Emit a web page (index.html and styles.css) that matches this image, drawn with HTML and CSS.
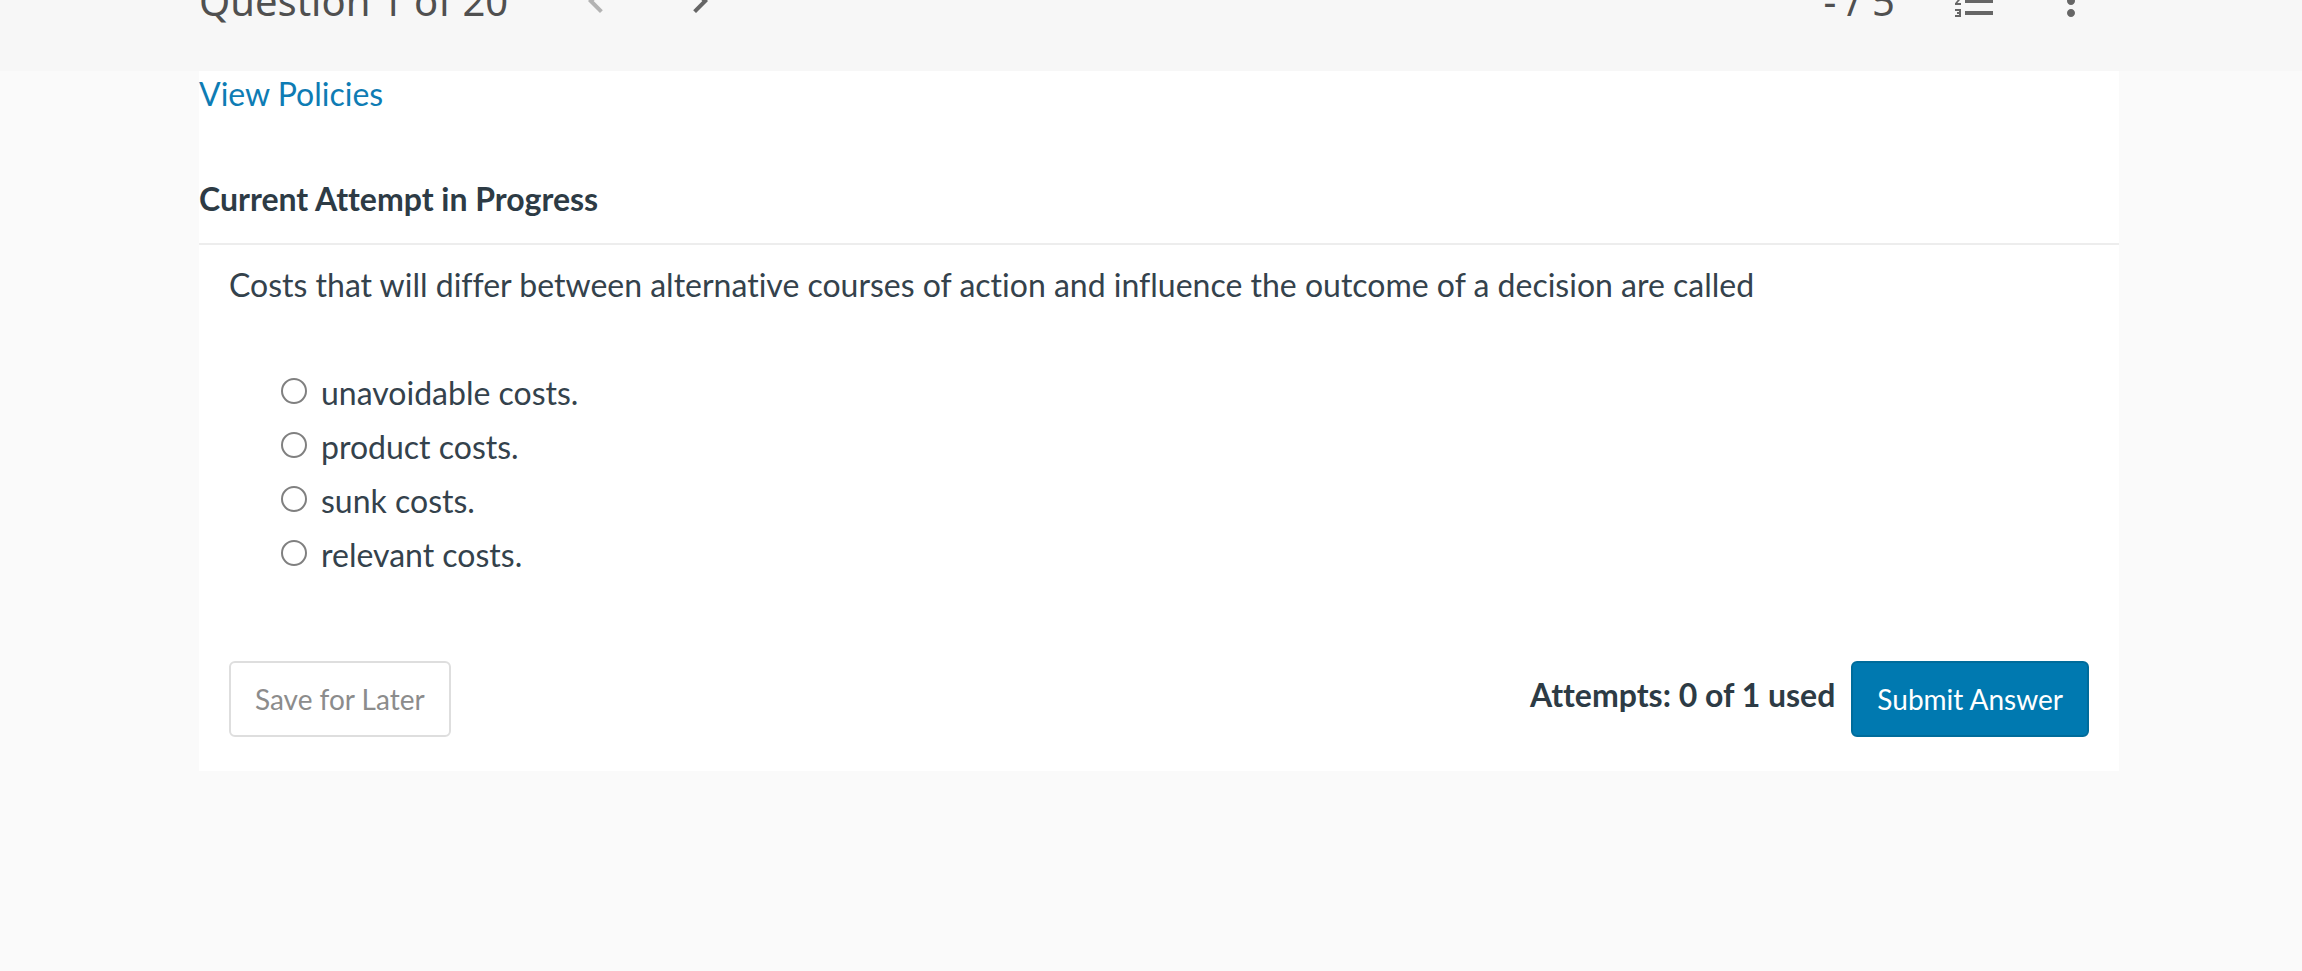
FILE: index.html
```html
<!DOCTYPE html>
<html lang="en">
<head>
  <meta charset="UTF-8">
  <meta name="viewport" content="width=device-width, initial-scale=1.0">
  <title>Question 1 of 20</title>
  <link rel="stylesheet" href="styles.css">
</head>
<body>
  <!-- Toolbar -->
  <header class="toolbar">
    <h1 class="title">Question 1 of 20</h1>
    <nav class="pager">
      <button class="icon-btn" type="button" aria-label="Previous question" disabled>
        <svg viewBox="0 0 24 24"><path d="M15.41 7.41L14 6l-6 6 6 6 1.41-1.41L10.83 12z"/></svg>
      </button>
      <button class="icon-btn" type="button" aria-label="Next question">
        <svg viewBox="0 0 24 24"><path d="M10 6L8.59 7.41 13.17 12l-4.58 4.59L10 18l6-6z"/></svg>
      </button>
    </nav>
    <div class="tools">
      <span class="score">- / 5</span>
      <button class="icon-btn" type="button" aria-label="Question list">
        <svg viewBox="0 0 24 24"><path d="M2 17h2v.5H3v1h1v.5H2v1h3v-4H2v1zm1-9h1V4H2v1h1v3zm-1 3h1.8L2 13.1v.9h3v-1H3.2L5 10.9V10H2v1zm5-6v2h14V5H7zm0 14h14v-2H7v2zm0-6h14v-2H7v2z"/></svg>
      </button>
      <button class="icon-btn" type="button" aria-label="More options">
        <svg viewBox="0 0 24 24"><path d="M12 8c1.1 0 2-.9 2-2s-.9-2-2-2-2 .9-2 2 .9 2 2 2zm0 2c-1.1 0-2 .9-2 2s.9 2 2 2 2-.9 2-2-.9-2-2-2zm0 6c-1.1 0-2 .9-2 2s.9 2 2 2 2-.9 2-2-.9-2-2-2z"/></svg>
      </button>
    </div>
  </header>

  <!-- Question -->
  <main class="card">
    <a class="policies" href="#">View Policies</a>
    <h2 class="status">Current Attempt in Progress</h2>

    <form class="question">
      <fieldset class="choices">
        <legend class="prompt">Costs that will differ between alternative courses of action and influence the outcome of a decision are called</legend>
        <label class="choice"><input type="radio" name="answer" value="a">unavoidable costs.</label>
        <label class="choice"><input type="radio" name="answer" value="b">product costs.</label>
        <label class="choice"><input type="radio" name="answer" value="c">sunk costs.</label>
        <label class="choice"><input type="radio" name="answer" value="d">relevant costs.</label>
      </fieldset>

      <div class="actions">
        <button class="btn" type="button">Save for Later</button>
        <span class="attempts">Attempts: 0 of 1 used</span>
        <button class="btn btn-primary" type="submit">Submit Answer</button>
      </div>
    </form>
  </main>
</body>
</html>
```
FILE: styles.css
```css
* {
  margin: 0;
  padding: 0;
  box-sizing: border-box;
}
body {
  font-family: Lato, sans-serif;
  font-size: 32px;
  line-height: 48px;
  font-variant-ligatures: none;
  background: #fafafa;
  color: #34424c;
}
/* the toolbar is scrolled half out of view */
.toolbar {
  display: flex;
  align-items: center;
  height: 140px;
  margin-top: -69px;
  padding: 0 207px 0 199px;
  background: #f7f7f7;
  color: #505050;
}
.title, .score {
  font-family: "Noto Sans", sans-serif;
  font-size: 40px;
  font-weight: 400;
}
.pager {
  display: flex;
  gap: 56px;
  margin-left: 64px;
}
.tools {
  display: flex;
  align-items: center;
  gap: 48px;
  margin-left: auto;
}
.score {
  margin-right: 8px;
}
.icon-btn {
  width: 48px;
  height: 48px;
  border: none;
  background: none;
  color: #666;
  cursor: pointer;
}
.icon-btn:disabled {
  color: #b3b3b3;
}
.icon-btn svg {
  display: block;
  fill: currentColor;
}
.card {
  margin: 0 183px 0 199px;
  background: #fff;
}
.policies {
  display: block;
  line-height: 46px;
  color: #0e7cb4;
  text-decoration: none;
}
.status {
  margin-top: 58px;
  padding-bottom: 20px;
  border-bottom: 2px solid #ededed;
  color: #2d3b45;
  font-size: 32px;
}
.question {
  padding: 16px 30px 34px;
}
.choices {
  border: none;
}
.prompt {
  margin-bottom: 60px;
}
.choice {
  display: flex;
  align-items: center;
  width: max-content;
  margin: 0 0 6px 52px;
}
.choice input {
  appearance: none;
  width: 26px;
  height: 26px;
  margin-right: 14px;
  margin-bottom: 4px;
  border: 2px solid #808080;
  border-radius: 50%;
  background: #fff;
}
.choice input:checked {
  border-width: 8px;
  border-color: #0079ad;
}
.actions {
  display: flex;
  align-items: center;
  margin-top: 76px;
}
.btn {
  height: 76px;
  padding: 0 24px;
  border: 2px solid #dedede;
  border-radius: 6px;
  background: #fff;
  color: #8c8c8c;
  font-family: inherit;
  font-size: 28px;
  cursor: pointer;
}
.btn-primary {
  border-color: #006c9b;
  background: #0079b0;
  color: #fff;
}
.attempts {
  margin: 0 16px 8px auto;
  color: #2d3b45;
  font-weight: 700;
}
```
